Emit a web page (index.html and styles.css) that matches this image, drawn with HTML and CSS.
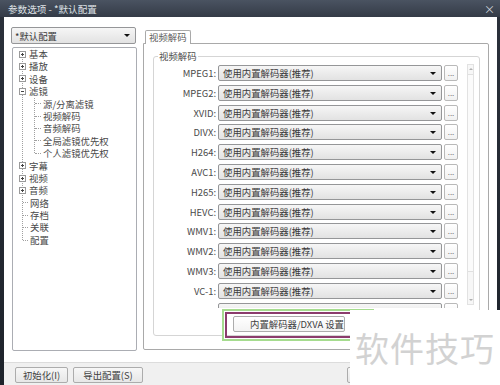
FILE: index.html
```html
<!DOCTYPE html>
<html lang="zh-CN">
<head>
    <meta charset="UTF-8">
    <title>参数选项</title>
    <link rel="stylesheet" href="styles.css">
</head>
<body>
<div class="window">
    <div class="titlebar">
        <span class="title">参数选项 - *默认配置</span>
        <span class="close">×</span>
    </div>
    <div class="frame">
        <div class="main">
            <div class="left">
                <div class="combo"><span>*默认配置</span><span class="arrow"></span></div>
                <div class="tree">
                    <div class="root">
                        <div class="items">
                            <div class="node"><span class="exp plus"></span>基本</div>
                            <div class="node"><span class="exp plus"></span>播放</div>
                            <div class="node"><span class="exp plus"></span>设备</div>
                            <div class="node"><span class="exp"></span>滤镜</div>
                            <div class="children">
                                <div class="kids">
                                    <div class="node"><span class="tick"></span>源/分离滤镜</div>
                                    <div class="node"><span class="tick"></span>视频解码</div>
                                    <div class="node"><span class="tick"></span>音频解码</div>
                                    <div class="node"><span class="tick"></span>全局滤镜优先权</div>
                                    <div class="node"><span class="tick"></span>个人滤镜优先权</div>
                                </div>
                            </div>
                            <div class="node"><span class="exp plus"></span>字幕</div>
                            <div class="node"><span class="exp plus"></span>视频</div>
                            <div class="node"><span class="exp plus"></span>音频</div>
                            <div class="node"><span class="tick"></span>网络</div>
                            <div class="node"><span class="tick"></span>存档</div>
                            <div class="node"><span class="tick"></span>关联</div>
                            <div class="node"><span class="tick"></span>配置</div>
                        </div>
                    </div>
                </div>
            </div>
            <div class="right">
                <div class="tabs"><div class="tab">视频解码</div></div>
                <div class="panel">
                    <div class="group">
                        <div class="group-title">视频解码</div>
                        <div class="scroll">
                            <div class="list">
                                <div class="row"><span class="label">MPEG1:</span><div class="select">使用内置解码器(推荐)<span class="arrow"></span></div><div class="more">...</div></div>
                                <div class="row"><span class="label">MPEG2:</span><div class="select">使用内置解码器(推荐)<span class="arrow"></span></div><div class="more">...</div></div>
                                <div class="row"><span class="label">XVID:</span><div class="select">使用内置解码器(推荐)<span class="arrow"></span></div><div class="more">...</div></div>
                                <div class="row"><span class="label">DIVX:</span><div class="select">使用内置解码器(推荐)<span class="arrow"></span></div><div class="more">...</div></div>
                                <div class="row"><span class="label">H264:</span><div class="select">使用内置解码器(推荐)<span class="arrow"></span></div><div class="more">...</div></div>
                                <div class="row"><span class="label">AVC1:</span><div class="select">使用内置解码器(推荐)<span class="arrow"></span></div><div class="more">...</div></div>
                                <div class="row"><span class="label">H265:</span><div class="select">使用内置解码器(推荐)<span class="arrow"></span></div><div class="more">...</div></div>
                                <div class="row"><span class="label">HEVC:</span><div class="select">使用内置解码器(推荐)<span class="arrow"></span></div><div class="more">...</div></div>
                                <div class="row"><span class="label">WMV1:</span><div class="select">使用内置解码器(推荐)<span class="arrow"></span></div><div class="more">...</div></div>
                                <div class="row"><span class="label">WMV2:</span><div class="select">使用内置解码器(推荐)<span class="arrow"></span></div><div class="more">...</div></div>
                                <div class="row"><span class="label">WMV3:</span><div class="select">使用内置解码器(推荐)<span class="arrow"></span></div><div class="more">...</div></div>
                                <div class="row"><span class="label">VC-1:</span><div class="select">使用内置解码器(推荐)<span class="arrow"></span></div><div class="more">...</div></div>
                                <div class="row"><span class="label"></span><div class="select"></div><div class="more"></div></div>
                            </div>
                            <div class="scrollbar">
                                <div class="sb-btn up"></div>
                                <div class="sb-track"><div class="sb-thumb"></div></div>
                                <div class="sb-btn down"></div>
                            </div>
                        </div>
                        <div class="dxva-row">
                            <div class="dxva">
                                <div class="btn wide">内置解码器/DXVA 设置</div>
                                <span class="mark"></span>
                            </div>
                        </div>
                    </div>
                </div>
            </div>
        </div>
        <div class="footer">
            <div class="btn">初始化(I)</div>
            <div class="btn">导出配置(S)</div>
            <div class="btn ok"></div>
        </div>
    </div>
    <div class="watermark">软件技巧</div>
</div>
</body>
</html>
```

FILE: styles.css
```css
body {
    margin: 0;
    font-family: "Noto Sans CJK SC", "Liberation Sans", sans-serif;
    font-size: 9.4px;
    color: #484848;
}

.window {
    position: relative;
    width: 500px;
    height: 385px;
    display: flex;
    flex-direction: column;
    overflow: hidden;
    background: linear-gradient(to bottom, #2b313b, #1e232b);
}

.titlebar {
    height: 17px;
    flex: none;
    display: flex;
    align-items: center;
    justify-content: space-between;
    padding: 0 5px 0 8px;
    background: linear-gradient(to bottom, #4a5361, #343b47);
    color: #dfe2e7;
}

.title {
    font-size: 9.6px;
}

.close {
    font-size: 11px;
    color: #cfd3da;
}

.frame {
    flex: 1;
    margin: 0 3px 0 4px;
    background-color: #ffffff;
    display: flex;
    flex-direction: column;
}

.main {
    height: 345px;
    flex: none;
    display: flex;
    padding: 10px 0 0 7px;
    box-sizing: border-box;
}

.left {
    width: 126px;
    display: flex;
    flex-direction: column;
}

.combo,
.select {
    position: relative;
    height: 16px;
    line-height: 15px;
    box-sizing: border-box;
    padding-left: 4px;
    border: 1px solid #959698;
    border-radius: 2px;
    background: linear-gradient(to bottom, #f6f6f6, #e2e2e2);
    color: #3a3a3a;
    white-space: nowrap;
}

.combo {
    width: 125px;
    height: 17px;
    line-height: 16px;
    padding-left: 3px;
}

.arrow {
    position: absolute;
    right: 5px;
    top: 6px;
    border-left: 3px solid transparent;
    border-right: 3px solid transparent;
    border-top: 3px solid #111111;
}

.tree {
    margin: 3px 0 0 1px;
    width: 125px;
    height: 304px;
    box-sizing: border-box;
    border: 1px solid #abadb3;
    border-radius: 2px;
    background-color: #ffffff;
}

.root {
    margin: 6px 0 6px 9px;
    border-left: 1px dotted #a0a0a0;
    display: flex;
    flex-direction: column;
}

.items {
    margin: -6px 0;
}

.node {
    height: 12.4px;
    line-height: 12.4px;
    display: flex;
    align-items: center;
    white-space: nowrap;
}

.exp {
    position: relative;
    width: 7px;
    height: 7px;
    box-sizing: border-box;
    margin: 0 3px 0 -4px;
    border: 1px solid #9a9a9a;
    background-color: #ffffff;
}

.exp::before {
    content: "";
    position: absolute;
    left: 1px;
    top: 2px;
    width: 3px;
    height: 1px;
    background-color: #444444;
}

.exp.plus::after {
    content: "";
    position: absolute;
    left: 2px;
    top: 1px;
    width: 1px;
    height: 3px;
    background-color: #444444;
}

.tick {
    width: 5px;
    border-top: 1px dotted #a0a0a0;
    margin-right: 2px;
}

.children {
    margin: 0 0 6.2px 11px;
    border-left: 1px dotted #a0a0a0;
    display: flex;
    flex-direction: column;
}

.kids {
    margin-bottom: -6.2px;
}

.kids .tick {
    width: 6px;
    margin-right: 2px;
}

.right {
    margin-left: 6px;
    width: 346px;
    display: flex;
    flex-direction: column;
}

.tabs {
    display: flex;
    padding: 2px 0 0 2px;
}

.tab {
    height: 13px;
    line-height: 12px;
    padding: 0 3px;
    border: 1px solid #a9a9a9;
    border-bottom: none;
    border-radius: 2px 2px 0 0;
    background-color: #ffffff;
    color: #5a5a5a;
    position: relative;
    top: 1px;
}

.panel {
    height: 307px;
    box-sizing: border-box;
    border: 1px solid #a9a9a9;
    border-radius: 0 2px 2px 2px;
    padding: 12px 8px 0 9px;
}

.group {
    position: relative;
    height: 280px;
    box-sizing: border-box;
    border: 1px solid #d5d5d5;
    border-radius: 3px;
    padding-top: 6px;
}

.group-title {
    position: absolute;
    left: 4px;
    top: -7px;
    padding: 0 1px;
    line-height: 12px;
    background-color: #ffffff;
    color: #4a4a4a;
}

.scroll {
    height: 245px;
    display: flex;
    overflow: hidden;
}

.list {
    display: flex;
    flex-direction: column;
    gap: 3.8px;
    padding-top: 2px;
}

.row {
    display: grid;
    grid-template-columns: 62px 224px 14px;
    column-gap: 2px;
    height: 16px;
    flex: none;
}

.label {
    text-align: right;
    line-height: 16px;
    color: #4a4a4a;
    white-space: nowrap;
}

.more {
    height: 16px;
    box-sizing: border-box;
    border: 1px solid #b9b9b9;
    border-radius: 2px;
    background: linear-gradient(to bottom, #ffffff, #f1f1f1);
    text-align: center;
    line-height: 13px;
    font-size: 8px;
    color: #777777;
}

.scrollbar {
    margin: 1px 0 0 9px;
    width: 7px;
    height: 241px;
    display: flex;
    flex-direction: column;
    box-sizing: border-box;
    border: 1px solid #e2e2e2;
    background-color: #f7f7f7;
}

.sb-btn {
    position: relative;
    height: 8px;
    flex: none;
}

.sb-btn::after {
    content: "";
    position: absolute;
    left: 1px;
    top: 3px;
    border-left: 2px solid transparent;
    border-right: 2px solid transparent;
}

.sb-btn.up::after {
    border-bottom: 2px solid #b0b0b0;
}

.sb-btn.down::after {
    border-top: 2px solid #b0b0b0;
}

.sb-track {
    flex: 1;
    padding-top: 1px;
}

.sb-thumb {
    height: 196px;
    border-top: 1px solid #e0e0e0;
    border-bottom: 1px solid #e0e0e0;
    background-color: #fbfbfb;
}

.dxva-row {
    margin: 8px 0 0 79px;
}

.dxva {
    position: relative;
    display: inline-block;
}

.btn {
    height: 16px;
    line-height: 14px;
    box-sizing: border-box;
    padding: 0 8px;
    border: 1px solid #acacac;
    border-radius: 2px;
    background: linear-gradient(to bottom, #f7f7f7, #e7e7e7);
    color: #404040;
    text-align: center;
    white-space: nowrap;
}

.btn.wide {
    width: 112px;
    background: linear-gradient(to bottom, #ffffff, #f3f3f3);
    text-align: left;
    padding-left: 16px;
}

.mark {
    position: absolute;
    left: -11px;
    right: -29px;
    top: -7px;
    bottom: -9px;
    border: 2px solid #a6dc8f;
    box-shadow: inset 0 0 0 1px #ffffff, inset 0 0 0 3px #8b3c6c;
}

.footer {
    flex: 1;
    display: flex;
    align-items: flex-start;
    padding: 4px 0 0 11px;
    border-top: 1px solid #dcdcdc;
    background-color: #f0f0f0;
}

.footer .btn {
    width: 53px;
    padding: 0;
}

.footer .btn + .btn {
    margin-left: 5px;
    width: 70px;
}

.footer .btn.ok {
    margin-left: 204px;
    width: 48px;
}

.watermark {
    position: absolute;
    left: 350px;
    top: 310px;
    right: 0;
    bottom: 0;
    background-color: #ffffff;
    color: #d2d2d2;
    font-size: 34px;
    line-height: 75px;
    padding-left: 5px;
    letter-spacing: 1px;
    white-space: nowrap;
}
```
